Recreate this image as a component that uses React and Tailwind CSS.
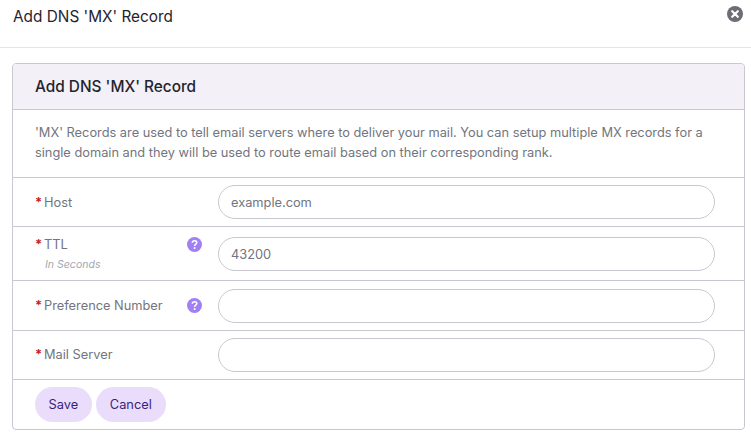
import React from "react";

const CloseIcon = () => (
  <svg width="16" height="16" viewBox="0 0 16 16">
    <circle cx="8" cy="8" r="8" fill="#6f6d74" />
    <path d="M5.2 5.2L10.8 10.8M10.8 5.2L5.2 10.8" stroke="#fff" strokeWidth="2.2" strokeLinecap="round" />
  </svg>
);

const HelpIcon = () => (
  <svg width="15" height="15" viewBox="0 0 15 15" className="shrink-0">
    <circle cx="7.5" cy="7.5" r="7.5" fill="#a180f5" />
    <path d="M5.3 5.7C5.4 4.5 6.3 3.7 7.6 3.7C8.9 3.7 9.8 4.5 9.8 5.6C9.8 7.1 7.6 7.2 7.6 8.9" fill="none" stroke="#fff" strokeWidth="1.6" />
    <circle cx="7.6" cy="11" r="1" fill="#fff" />
  </svg>
);

const Row = ({ label, hint, help, value, placeholder, className, labelClass = "" }) => (
  <div className={`flex border-b border-[#c9c7cf] pr-[29px] ${className}`}>
    <div className="w-[205px] shrink-0 pl-[22px]">
      <div className={`flex items-start ${labelClass}`}>
        <span className="w-[9px] text-[12.8px] leading-[22px] font-bold text-[#c0261f]">*</span>
        <span className="text-[12.8px] leading-[22px] text-[#72757e]">{label}</span>
        {help && <span className="mt-[3px] mr-[16px] ml-auto"><HelpIcon /></span>}
      </div>
      {hint && <div className="mt-[2px] pl-[10px] text-[10.56px] leading-[14px] text-[#a3a8b0] italic">{hint}</div>}
    </div>
    <input
      readOnly
      value={value}
      placeholder={placeholder}
      className="h-[34px] flex-1 rounded-full border border-[#c9c7cf] bg-white px-[12px] text-[12.8px] text-[#72757e] outline-none placeholder:text-[#72757e]"
    />
  </div>
);

export default function App() {
  return (
    <div className="h-[448px] w-[751px] overflow-hidden bg-white font-['Inter',sans-serif]">
      {/* Modal header */}
      <div className="flex h-[48px] items-start justify-between border-b border-[#e5e5e5] pr-[8px] pl-[13px]">
        <h1 className="mt-[6px] text-[15.36px] leading-[22px] text-[#1f2430]">Add DNS 'MX' Record</h1>
        <button className="mt-[6px]"><CloseIcon /></button>
      </div>

      {/* Card */}
      <div className="mt-[15px] mr-[6px] ml-[12px] overflow-hidden rounded-[4px] border border-[#c9c7cf]">
        <div className="flex h-[46px] items-center border-b border-[#c9c7cf] bg-[#f4f0f7] pl-[22px]">
          <h2 className="text-[15.36px] font-medium text-[#1f2430]">Add DNS 'MX' Record</h2>
        </div>
        <div className="h-[68px] border-b border-[#c9c7cf] px-[22px] pt-[13px] text-[12.8px] leading-[20px] text-[#72757e]">
          'MX' Records are used to tell email servers where to deliver your mail. You can setup multiple MX records for a single domain and they will be used to route email based on their corresponding rank.
        </div>
        <Row label="Host" placeholder="example.com" labelClass="pt-[2px]" className="h-[49px] items-center" />
        <Row label="TTL" hint="In Seconds" help value="43200" labelClass="pt-[1px]" className="h-[54px] items-start pt-[6px] [&>input]:mt-[4px]" />
        <Row label="Preference Number" help className="h-[50px] items-center" />
        <Row label="Mail Server" className="h-[49px] items-center" />
        <div className="flex h-[49px] items-center gap-[4px] pl-[22px]">
          <button className="h-[35px] rounded-full bg-[#eaddfc] px-[13.6px] text-[12.8px] text-[#3b1d7a]">Save</button>
          <button className="h-[35px] rounded-full bg-[#eaddfc] px-[14px] text-[12.8px] text-[#3b1d7a]">Cancel</button>
        </div>
      </div>
    </div>
  );
}
